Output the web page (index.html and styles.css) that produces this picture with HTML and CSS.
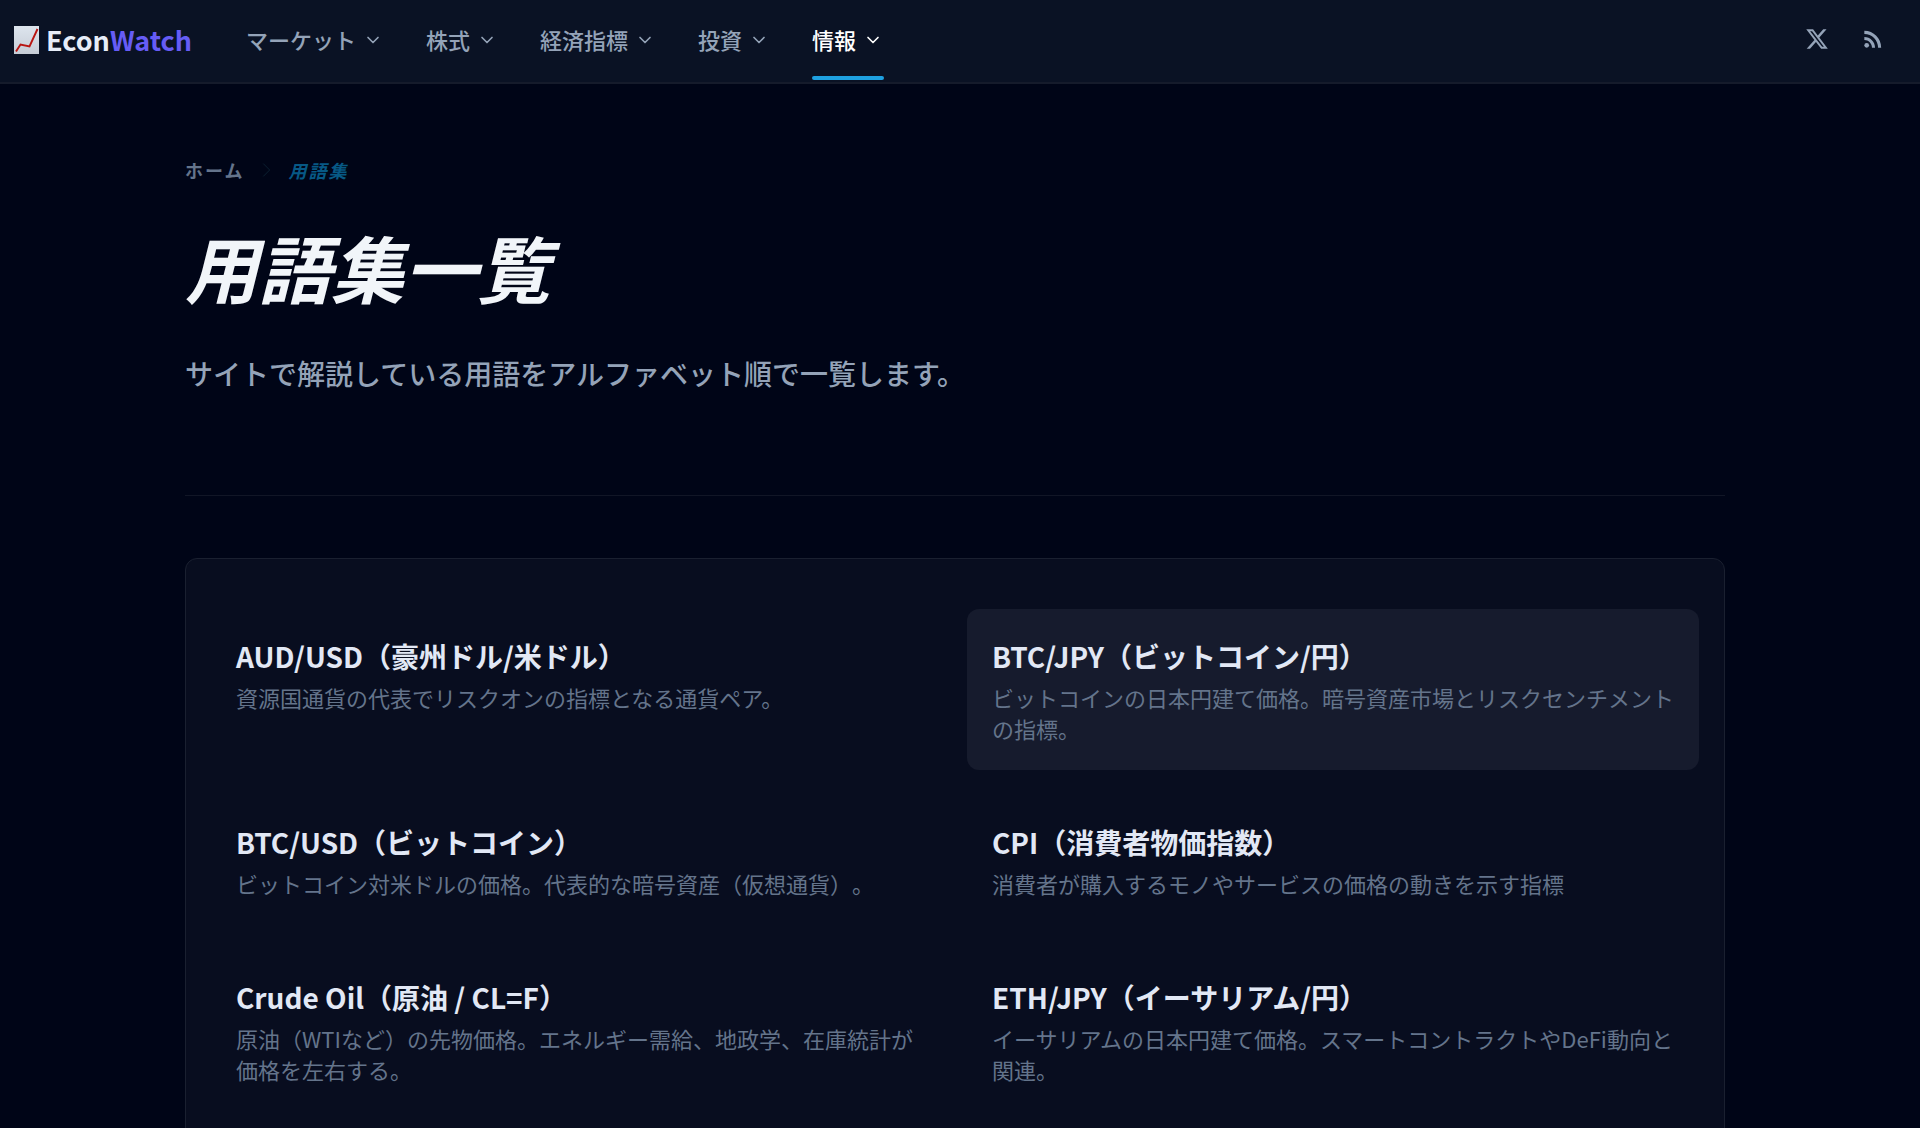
FILE: index.html
```html
<!DOCTYPE html>
<html lang="ja">
<head>
<meta charset="utf-8">
<meta name="viewport" content="width=device-width, initial-scale=1">
<title>用語集一覧 | EconWatch</title>
<link rel="stylesheet" href="styles.css">
</head>
<body>
<header class="site-header">
  <a class="brand" href="#">
    <svg class="brand-mark" viewBox="0 0 25 28" aria-hidden="true">
      <defs><linearGradient id="paper" x1="0" y1="0" x2="0" y2="1"><stop offset="0" stop-color="#dde5ee"/><stop offset="1" stop-color="#c6ccd6"/></linearGradient></defs>
      <rect width="25" height="28" fill="url(#paper)"/>
      <path d="M2 25.500 6.500 18.500 15.500 20.500 23.500 3" fill="none" stroke="#b91512" stroke-width="1.900"/>
    </svg>
    <span>Econ<span class="brand-accent">Watch</span></span>
  </a>
  <nav class="main-nav" aria-label="メイン">
    <button class="nav-item" type="button">マーケット<svg class="chevron" viewBox="0 0 24 24" aria-hidden="true"><path d="m6 9 6 6 6-6"/></svg></button>
    <button class="nav-item" type="button">株式<svg class="chevron" viewBox="0 0 24 24" aria-hidden="true"><path d="m6 9 6 6 6-6"/></svg></button>
    <button class="nav-item" type="button">経済指標<svg class="chevron" viewBox="0 0 24 24" aria-hidden="true"><path d="m6 9 6 6 6-6"/></svg></button>
    <button class="nav-item" type="button">投資<svg class="chevron" viewBox="0 0 24 24" aria-hidden="true"><path d="m6 9 6 6 6-6"/></svg></button>
    <button class="nav-item is-active" type="button">情報<svg class="chevron" viewBox="0 0 24 24" aria-hidden="true"><path d="m6 9 6 6 6-6"/></svg></button>
  </nav>
  <div class="social">
    <a class="social-link" href="#" aria-label="X"><svg class="icon-x" viewBox="0 0 24 24" aria-hidden="true"><path d="M18.244 2.250h3.308l-7.227 8.260 8.502 11.240H16.170l-5.214-6.817L4.990 21.750H1.680l7.730-8.835L1.254 2.250H8.080l4.713 6.231zm-1.161 17.520h1.833L7.084 4.126H5.117z"/></svg></a>
    <a class="social-link" href="#" aria-label="RSS"><svg class="icon-rss" viewBox="0 0 24 24" aria-hidden="true"><circle cx="6.180" cy="17.820" r="2.180"/><path d="M4 4.440v2.830c7.030 0 12.730 5.700 12.730 12.730h2.830c0-8.590-6.970-15.560-15.560-15.560zm0 5.660v2.830c3.900 0 7.070 3.170 7.070 7.070h2.830c0-5.470-4.430-9.900-9.900-9.900z"/></svg></a>
  </div>
</header>
<main class="page">
  <section class="intro">
    <nav class="breadcrumb" aria-label="パンくず">
      <a class="crumb" href="#">ホーム</a>
      <svg class="crumb-sep" viewBox="0 0 24 24" aria-hidden="true"><path d="m9 5 7 7-7 7"/></svg>
      <span class="crumb crumb-current" aria-current="page">用語集</span>
    </nav>
    <h1 class="title">用語集一覧</h1>
    <p class="lead">サイトで解説している用語をアルファベット順で一覧します。</p>
  </section>
  <section class="panel">
    <a class="term" href="#"><h2 class="term-name">AUD/USD（豪州ドル/米ドル）</h2><p class="term-text">資源国通貨の代表でリスクオンの指標となる通貨ペア。</p></a>
    <a class="term is-hovered" href="#"><h2 class="term-name">BTC/JPY（ビットコイン/円）</h2><p class="term-text">ビットコインの日本円建て価格。暗号資産市場とリスクセンチメントの指標。</p></a>
    <a class="term" href="#"><h2 class="term-name">BTC/USD（ビットコイン）</h2><p class="term-text">ビットコイン対米ドルの価格。代表的な暗号資産（仮想通貨）。</p></a>
    <a class="term" href="#"><h2 class="term-name">CPI（消費者物価指数）</h2><p class="term-text">消費者が購入するモノやサービスの価格の動きを示す指標</p></a>
    <a class="term" href="#"><h2 class="term-name">Crude Oil（原油 / CL=F）</h2><p class="term-text">原油（WTIなど）の先物価格。エネルギー需給、地政学、在庫統計が価格を左右する。</p></a>
    <a class="term" href="#"><h2 class="term-name">ETH/JPY（イーサリアム/円）</h2><p class="term-text">イーサリアムの日本円建て価格。スマートコントラクトやDeFi動向と関連。</p></a>
  </section>
</main>
</body>
</html>
```
FILE: styles.css
```css
* { box-sizing: border-box; }

body {
  margin: 0;
  padding-right: 10px;
  background: #000517;
  color: #e2e8f0;
  font-family: "Noto Sans CJK JP", sans-serif;
  text-spacing-trim: space-all;
}

h1, h2, p { margin: 0; }
a { color: inherit; text-decoration: none; }

.site-header {
  display: flex;
  align-items: stretch;
  height: 84px;
  margin-right: -10px;
  padding: 0 34px 0 14px;
  background: #0a1224;
  border-bottom: 2px solid #151b2b;
}

.brand {
  display: flex;
  align-items: center;
  gap: 7px;
  width: 232px;
  padding-bottom: 2px;
  font-size: 27px;
  line-height: 40px;
  font-weight: 700;
  color: #e7edf8;
}
.brand-mark { width: 25px; height: 28px; }
.brand-accent { color: #665cf5; }

.main-nav { display: flex; gap: 42px; }

.nav-item {
  display: flex;
  align-items: center;
  gap: 6px;
  padding: 0 0 3px;
  border: 0;
  margin-bottom: 2px;
  background: none;
  color: #94a3b8;
  font: inherit;
  font-size: 22px;
  line-height: 32px;
  font-weight: 500;
  position: relative;
}
.nav-item.is-active { color: #fff; }
.nav-item.is-active::after {
  content: "";
  position: absolute;
  left: 0;
  right: 0;
  bottom: 0;
  height: 4px;
  border-radius: 2px;
  background: #1ea0e0;
}

.chevron {
  width: 20px;
  height: 20px;
  margin: 2px 1px 0;
  fill: none;
  stroke: currentColor;
  stroke-width: 2;
  stroke-linecap: round;
  stroke-linejoin: round;
}

.social {
  display: flex;
  align-items: center;
  gap: 31px;
  margin-left: auto;
  padding-bottom: 4px;
  color: #94a3b8;
}
.social-link { display: flex; }
.social svg { fill: currentColor; }
.icon-x { width: 24px; height: 24px; }
.icon-rss { width: 26px; height: 26px; }

.page {
  width: 1540px;
  max-width: 100%;
  margin: 0 auto;
  padding-top: 70px;
}

.intro {
  padding-bottom: 98px;
  border-bottom: 1px solid #111626;
}

.breadcrumb {
  display: flex;
  align-items: center;
  gap: 11px;
  font-size: 18px;
  line-height: 32px;
  font-weight: 700;
  letter-spacing: 2px;
  color: #64748b;
}
.crumb-sep {
  width: 22px;
  height: 22px;
  fill: none;
  stroke: #0c2233;
  stroke-width: 1;
}
.crumb-current { color: #075985; font-style: italic; }

.title {
  padding-top: 40px;
  font-size: 73px;
  line-height: 80px;
  font-weight: 700;
  font-style: italic;
  color: #f1f5f9;
}

.lead {
  padding-top: 43px;
  font-size: 28px;
  line-height: 48px;
  font-weight: 500;
  color: #94a3b8;
}

.panel {
  display: grid;
  grid-template-columns: 1fr 1fr;
  gap: 25px 24px;
  margin-top: 62px;
  padding: 50px 25px;
  border: 1px solid #1a2030;
  border-radius: 12px;
  background: #080d1f;
}

.term { padding: 25px; border-radius: 12px; }
.term.is-hovered { background: #161b2d; }

.term-name {
  margin-bottom: 4px;
  font-size: 28px;
  line-height: 44px;
  font-weight: 700;
  color: #e2e8f5;
}
.term-text {
  padding-bottom: 1px;
  font-size: 22px;
  line-height: 31px;
  color: #64748b;
}
```
